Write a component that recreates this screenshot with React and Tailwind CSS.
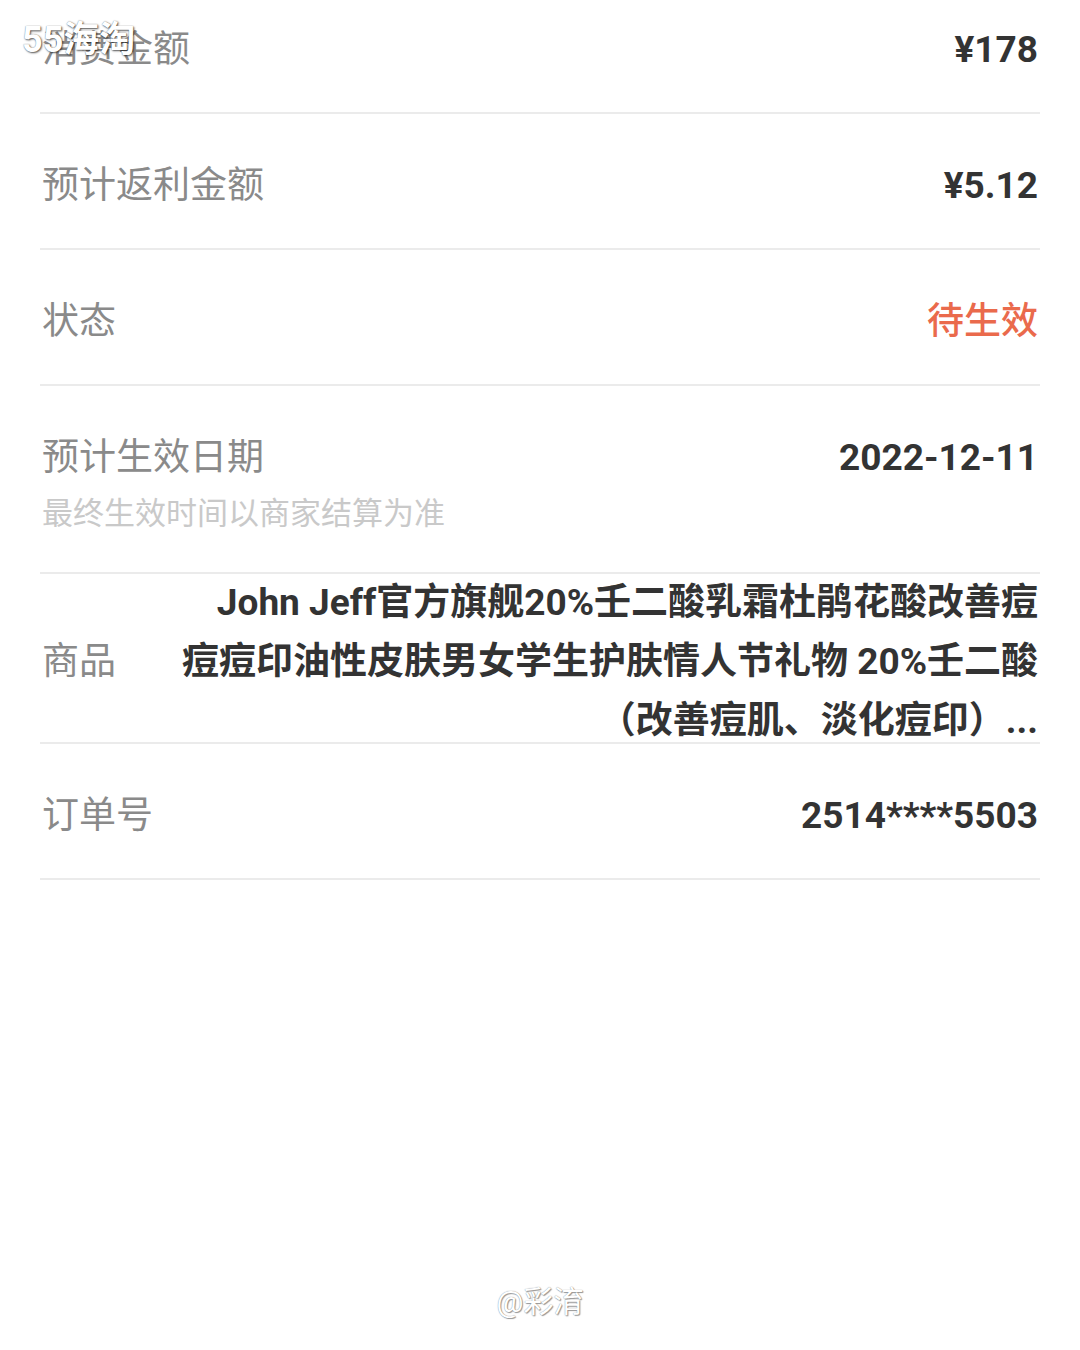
import React from "react";

const FONT = { fontFamily: "Roboto, 'Noto Sans CJK SC', sans-serif" };

function Row({ label, value, valueClass = "text-[#333333] font-bold", className = "h-[136px] pt-[10px]" }) {
  return (
    <div className={`flex items-center justify-between border-b-2 border-[#ebebeb] px-[2px] ${className}`}>
      <span className="text-[37px] leading-[44px] text-[#8a8a8a]">{label}</span>
      <span className={`text-[37px] leading-[44px] ${valueClass}`}>{value}</span>
    </div>
  );
}

export default function App() {
  return (
    <div className="relative h-[1350px] w-[1080px] overflow-hidden bg-white" style={FONT}>
      <div className="flex flex-col px-[40px]">
        <Row label="消费金额" value="¥178" className="h-[114px] pb-[12px]" />
        <Row label="预计返利金额" value="¥5.12" />
        <Row label="状态" value="待生效" valueClass="text-[#ea6a4c] font-medium" />

        <div className="flex h-[188px] justify-between border-b-2 border-[#ebebeb] px-[2px] pt-[50px]">
          <div className="flex flex-col">
            <span className="text-[37px] leading-[44px] text-[#8a8a8a]">预计生效日期</span>
            <span className="mt-[14px] text-[31px] leading-[40px] text-[#c9c9c9]">最终生效时间以商家结算为准</span>
          </div>
          <span className="text-[37px] leading-[44px] font-bold text-[#333333]">2022-12-11</span>
        </div>

        <div className="flex h-[170px] items-center justify-between border-b-2 border-[#ebebeb] px-[2px] pt-[8px]">
          <span className="text-[37px] leading-[44px] text-[#8a8a8a]">商品</span>
          <div className="-mt-[2px] flex flex-col items-end text-right text-[37px] leading-[59px] font-bold text-[#333333]">
            <span>John Jeff官方旗舰20%壬二酸乳霜杜鹃花酸改善痘</span>
            <span>痘痘印油性皮肤男女学生护肤情人节礼物 20%壬二酸</span>
            <span>（改善痘肌、淡化痘印）...</span>
          </div>
        </div>

        <Row label="订单号" value="2514****5503" />
      </div>

      <div className="absolute left-[22px] top-[20px] text-[36px] leading-[40px] font-bold text-white [text-shadow:1px_1px_2px_rgba(0,0,0,0.65),0_0_1px_rgba(0,0,0,0.5)]">
        55海淘
      </div>

      <div className="absolute left-0 right-0 top-[1282px] text-center text-[30px] leading-[40px] text-white [text-shadow:0_0_1px_#777,1px_1px_1px_#999]">
        @彩淯
      </div>
    </div>
  );
}
